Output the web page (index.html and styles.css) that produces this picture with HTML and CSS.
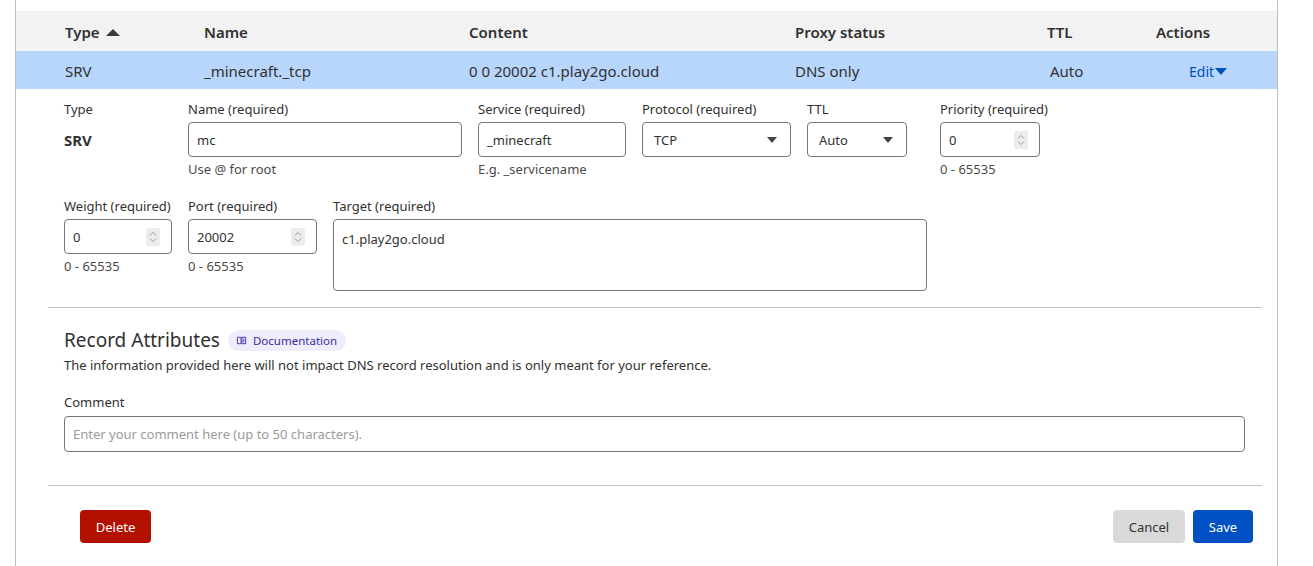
FILE: index.html
```html
<!DOCTYPE html>
<html lang="en">
<head>
<meta charset="utf-8">
<title>DNS record editor</title>
<link rel="stylesheet" href="styles.css">
</head>
<body>
<div class="panel">
  <div class="thead">
    <div class="th">Type <span class="sort-up"></span></div>
    <div class="th">Name</div>
    <div class="th">Content</div>
    <div class="th">Proxy status</div>
    <div class="th">TTL</div>
    <div class="th">Actions</div>
  </div>
  <div class="trow">
    <div class="td">SRV</div>
    <div class="td">_minecraft._tcp</div>
    <div class="td">0 0 20002 c1.play2go.cloud</div>
    <div class="td">DNS only</div>
    <div class="td td-ttl">Auto</div>
    <div class="td td-act"><span class="edit">Edit<span class="caret-down"></span></span></div>
  </div>

  <div class="editor">
    <div class="form-row">
      <div class="field w-type">
        <div class="label">Type</div>
        <div class="static">SRV</div>
      </div>
      <div class="field w-name">
        <div class="label">Name (required)</div>
        <div class="input">mc</div>
        <div class="hint">Use @ for root</div>
      </div>
      <div class="field w-service">
        <div class="label">Service (required)</div>
        <div class="input">_minecraft</div>
        <div class="hint">E.g. _servicename</div>
      </div>
      <div class="field w-proto">
        <div class="label">Protocol (required)</div>
        <div class="input select"><span class="val">TCP</span><span class="tri"></span></div>
      </div>
      <div class="field w-ttl">
        <div class="label">TTL</div>
        <div class="input select"><span class="val">Auto</span><span class="tri"></span></div>
      </div>
      <div class="field w-prio">
        <div class="label">Priority (required)</div>
        <div class="input number"><span class="val">0</span><span class="spin"><svg viewBox="0 0 14 18" width="14" height="18"><path d="M4 7.5 7 4.5 10 7.5M4 10.5 7 13.5 10 10.5" fill="none" stroke="#9a9a9a" stroke-width="1"/></svg></span></div>
        <div class="hint">0 - 65535</div>
      </div>
    </div>

    <div class="form-row row2">
      <div class="field w-weight">
        <div class="label">Weight (required)</div>
        <div class="input number"><span class="val">0</span><span class="spin"><svg viewBox="0 0 14 18" width="14" height="18"><path d="M4 7.5 7 4.5 10 7.5M4 10.5 7 13.5 10 10.5" fill="none" stroke="#9a9a9a" stroke-width="1"/></svg></span></div>
        <div class="hint">0 - 65535</div>
      </div>
      <div class="field w-port">
        <div class="label">Port (required)</div>
        <div class="input number"><span class="val">20002</span><span class="spin"><svg viewBox="0 0 14 18" width="14" height="18"><path d="M4 7.5 7 4.5 10 7.5M4 10.5 7 13.5 10 10.5" fill="none" stroke="#9a9a9a" stroke-width="1"/></svg></span></div>
        <div class="hint">0 - 65535</div>
      </div>
      <div class="field w-target">
        <div class="label">Target (required)</div>
        <div class="input textarea">c1.play2go.cloud</div>
      </div>
    </div>

    <div class="divider"></div>

    <div class="attrs">
      <div class="attrs-head">
        <h2 class="attrs-title">Record Attributes</h2>
        <span class="badge"><svg class="book" viewBox="0 0 12 12" width="11" height="11"><path d="M1.5 2.5h4v7h-4zM6.5 2.5h4v7h-4z" fill="none" stroke="#3c2ea0" stroke-width="1"/><path d="M7.7 4.5h1.6M7.7 6h1.6M7.7 7.5h1.6" stroke="#3c2ea0" stroke-width="0.8"/></svg>Documentation</span>
      </div>
      <p class="desc">The information provided here will not impact DNS record resolution and is only meant for your reference.</p>
      <div class="label comment-label">Comment</div>
      <div class="input comment"><span class="placeholder">Enter your comment here (up to 50 characters).</span></div>
    </div>

    <div class="divider divider2"></div>

    <div class="actions">
      <button class="btn btn-danger">Delete</button>
      <div class="actions-right">
        <button class="btn btn-cancel">Cancel</button>
        <button class="btn btn-primary">Save</button>
      </div>
    </div>
  </div>
</div>
</body>
</html>
```

FILE: styles.css
```css
* { box-sizing: border-box; }

body {
  margin: 0;
  background: #ffffff;
  font-family: "Noto Sans", "Open Sans", sans-serif;
  color: #313131;
}

.panel {
  margin-left: 15px;
  width: 1263px;
  min-height: 566px;
  border-left: 1px solid #bdbdbd;
  border-right: 1px solid #bdbdbd;
  padding-top: 11px;
}

.thead,
.trow {
  display: grid;
  grid-template-columns: 139px 265px 326px 252px 109px 1fr;
  padding-left: 49px;
  align-items: center;
}

.thead {
  height: 40px;
  padding-top: 2px;
  background: #f2f2f2;
}

.th {
  font-size: 15px;
  font-weight: 600;
  color: #313131;
  display: flex;
  align-items: center;
  gap: 6px;
}

.sort-up {
  width: 0;
  height: 0;
  border-left: 7px solid transparent;
  border-right: 7px solid transparent;
  border-bottom: 7px solid #3a3a3a;
}

.trow {
  height: 38px;
  padding-top: 2px;
  background: #b8d5fb;
}

.td {
  font-size: 15px;
  color: #313131;
}

.td-ttl { padding-left: 3px; }
.td-act { padding-left: 33px; }

.edit {
  color: #0051c3;
  font-size: 14px;
  display: inline-flex;
  align-items: center;
}

.caret-down {
  width: 0;
  height: 0;
  border-left: 6px solid transparent;
  border-right: 6px solid transparent;
  border-top: 7px solid #0051c3;
  margin-left: 1px;
}

.editor {
  padding: 0 15px 0 32px;
}

.form-row {
  display: flex;
  gap: 16px;
  padding: 11px 16px 0;
}

.row2 {
  padding-top: 19px;
}

.field {
  display: flex;
  flex-direction: column;
  flex-shrink: 0;
}

.label {
  font-size: 13px;
  line-height: 18px;
  color: #313131;
  white-space: nowrap;
}

.hint {
  font-size: 13px;
  line-height: 18px;
  margin-top: 3px;
  color: #4a4a4a;
  white-space: nowrap;
}

.static {
  margin-top: 4px;
  height: 35px;
  display: flex;
  align-items: center;
  font-size: 15px;
  font-weight: 700;
}

.input {
  margin-top: 4px;
  height: 35px;
  border: 1px solid #767676;
  border-radius: 4px;
  padding: 0 8px;
  display: flex;
  align-items: center;
  font-size: 13px;
  color: #313131;
  background: #fff;
}

.select {
  justify-content: space-between;
  padding: 0 13px 0 11px;
}

.tri {
  width: 0;
  height: 0;
  border-left: 5px solid transparent;
  border-right: 5px solid transparent;
  border-top: 6px solid #444;
}

.number {
  justify-content: space-between;
  padding: 0 11px 0 8px;
}

.spin {
  display: block;
  width: 14px;
  height: 18px;
  background: #ececec;
  border-radius: 2px;
}

.spin svg { display: block; }

.textarea {
  height: 72px;
  align-items: flex-start;
  padding: 10px 8px;
  line-height: 18px;
}

.w-type { width: 108px; }
.w-name { width: 274px; }
.w-service { width: 148px; }
.w-proto { width: 149px; }
.w-ttl { width: 100px; margin-right: 17px; }
.w-prio { width: 100px; }
.w-weight { width: 108px; }
.w-port { width: 129px; }
.w-target { width: 594px; }

.divider {
  height: 1px;
  background: #c4c4c4;
  margin-top: 16px;
}

.attrs {
  padding: 19px 17px 0 16px;
}

.attrs-head {
  display: flex;
  align-items: center;
  gap: 8px;
}

.attrs-title {
  margin: 0;
  font-size: 19px;
  font-weight: 400;
  line-height: 26px;
  color: #313131;
}

.badge {
  display: inline-flex;
  align-items: center;
  gap: 6px;
  height: 21px;
  padding: 0 9px 0 8px;
  border-radius: 11px;
  background: #efecfc;
  color: #3c2ea0;
  font-size: 11.5px;
}

.book { display: block; }

.desc {
  margin: 3px 0 0;
  font-size: 13px;
  line-height: 18px;
  color: #313131;
}

.comment-label {
  margin-top: 19px;
}

.comment {
  margin-top: 5px;
  height: 36px;
}

.placeholder {
  color: #9a9a9a;
}

.divider2 {
  margin-top: 33px;
}

.actions {
  display: flex;
  justify-content: space-between;
  align-items: center;
  padding: 24px 9px 0 32px;
}

.actions-right {
  display: flex;
  gap: 8px;
}

.btn {
  height: 33px;
  border: none;
  border-radius: 4px;
  font-family: inherit;
  font-size: 13px;
  padding: 0 15px;
  cursor: pointer;
}

.btn-danger {
  background: #b31100;
  color: #fff;
  width: 71px;
}

.btn-cancel {
  background: #d9d9d9;
  color: #313131;
  width: 72px;
}

.btn-primary {
  background: #0051c3;
  color: #fff;
  width: 60px;
}
```
